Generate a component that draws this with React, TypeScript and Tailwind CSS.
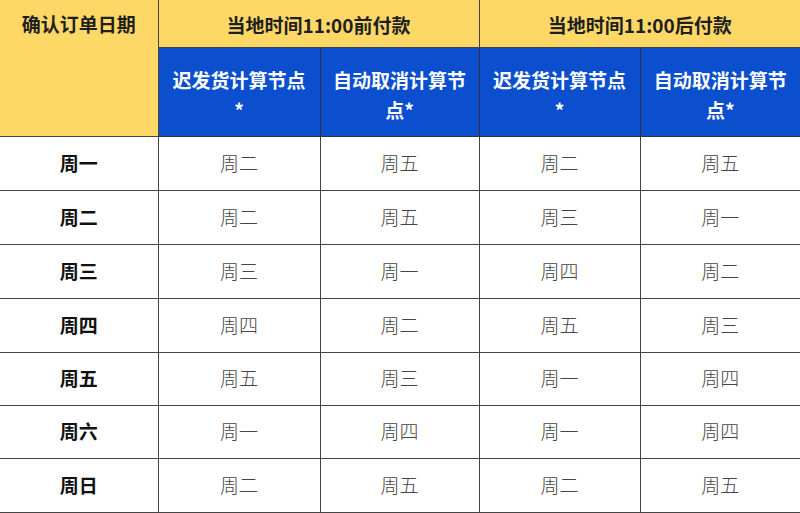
import React from "react"

const ROWS = [
  ["周一", "周二", "周五", "周二", "周五"],
  ["周二", "周二", "周五", "周三", "周一"],
  ["周三", "周三", "周一", "周四", "周二"],
  ["周四", "周四", "周二", "周五", "周三"],
  ["周五", "周五", "周三", "周一", "周四"],
  ["周六", "周一", "周四", "周一", "周四"],
  ["周日", "周二", "周五", "周二", "周五"],
]

const HEIGHTS = ["h-[54px]", "h-[54px]", "h-[54px]", "h-[54px]", "h-[53px]", "h-[53px]", "h-[54px]"]

export default function App() {
  return (
    <div className="w-[800px] h-[513px] bg-white overflow-hidden font-['Noto_Sans_CJK_SC','Noto_Sans',sans-serif]">
      <table className="w-[800px] table-fixed border-collapse text-center text-[19px]">
        <colgroup>
          <col className="w-[158px]" />
          <col className="w-[162px]" />
          <col className="w-[159px]" />
          <col className="w-[161px]" />
          <col className="w-[160px]" />
        </colgroup>
        <thead>
          <tr className="h-[47px]">
            <th
              rowSpan={2}
              className="bg-[#fdd866] text-[#1f1f1f] font-bold align-top pt-[10px] border-r-[1.5px] border-b-[1.5px] border-[#444]"
            >
              确认订单日期
            </th>
            <th colSpan={2} className="bg-[#fdd866] text-[#1f1f1f] font-bold pt-[3px] border-r-[1.5px] border-b border-[#444]">
              当地时间11:00前付款
            </th>
            <th colSpan={2} className="bg-[#fdd866] text-[#1f1f1f] font-bold pt-[3px] border-b border-[#444]">
              当地时间11:00后付款
            </th>
          </tr>
          <tr className="h-[89px] text-white font-bold leading-[30px]">
            <th className="bg-[#0b4fcf] px-2 pt-[6px] border-r border-b-[1.5px] border-[#333]">
              迟发货计算节点<br />*
            </th>
            <th className="bg-[#0b4fcf] px-2 pt-[6px] border-r-[1.5px] border-b-[1.5px] border-[#333]">
              自动取消计算节点*
            </th>
            <th className="bg-[#0b4fcf] px-2 pt-[6px] border-r border-b-[1.5px] border-[#333]">
              迟发货计算节点<br />*
            </th>
            <th className="bg-[#0b4fcf] px-2 pt-[6px] border-b-[1.5px] border-[#333]">
              自动取消计算节点*
            </th>
          </tr>
        </thead>
        <tbody>
          {ROWS.map((r, i) => (
            <tr key={r[0]} className={HEIGHTS[i]}>
              <td className="font-bold text-[#111] border-r-[1.5px] border-b-[1.5px] border-[#444]">{r[0]}</td>
              <td className="text-[#444] font-light border-r-[1.5px] border-b-[1.5px] border-[#444]">{r[1]}</td>
              <td className="text-[#444] font-light border-r-[1.5px] border-b-[1.5px] border-[#444]">{r[2]}</td>
              <td className="text-[#444] font-light border-r-[1.5px] border-b-[1.5px] border-[#444]">{r[3]}</td>
              <td className="text-[#444] font-light border-b-[1.5px] border-[#444]">{r[4]}</td>
            </tr>
          ))}
        </tbody>
      </table>
    </div>
  )
}
